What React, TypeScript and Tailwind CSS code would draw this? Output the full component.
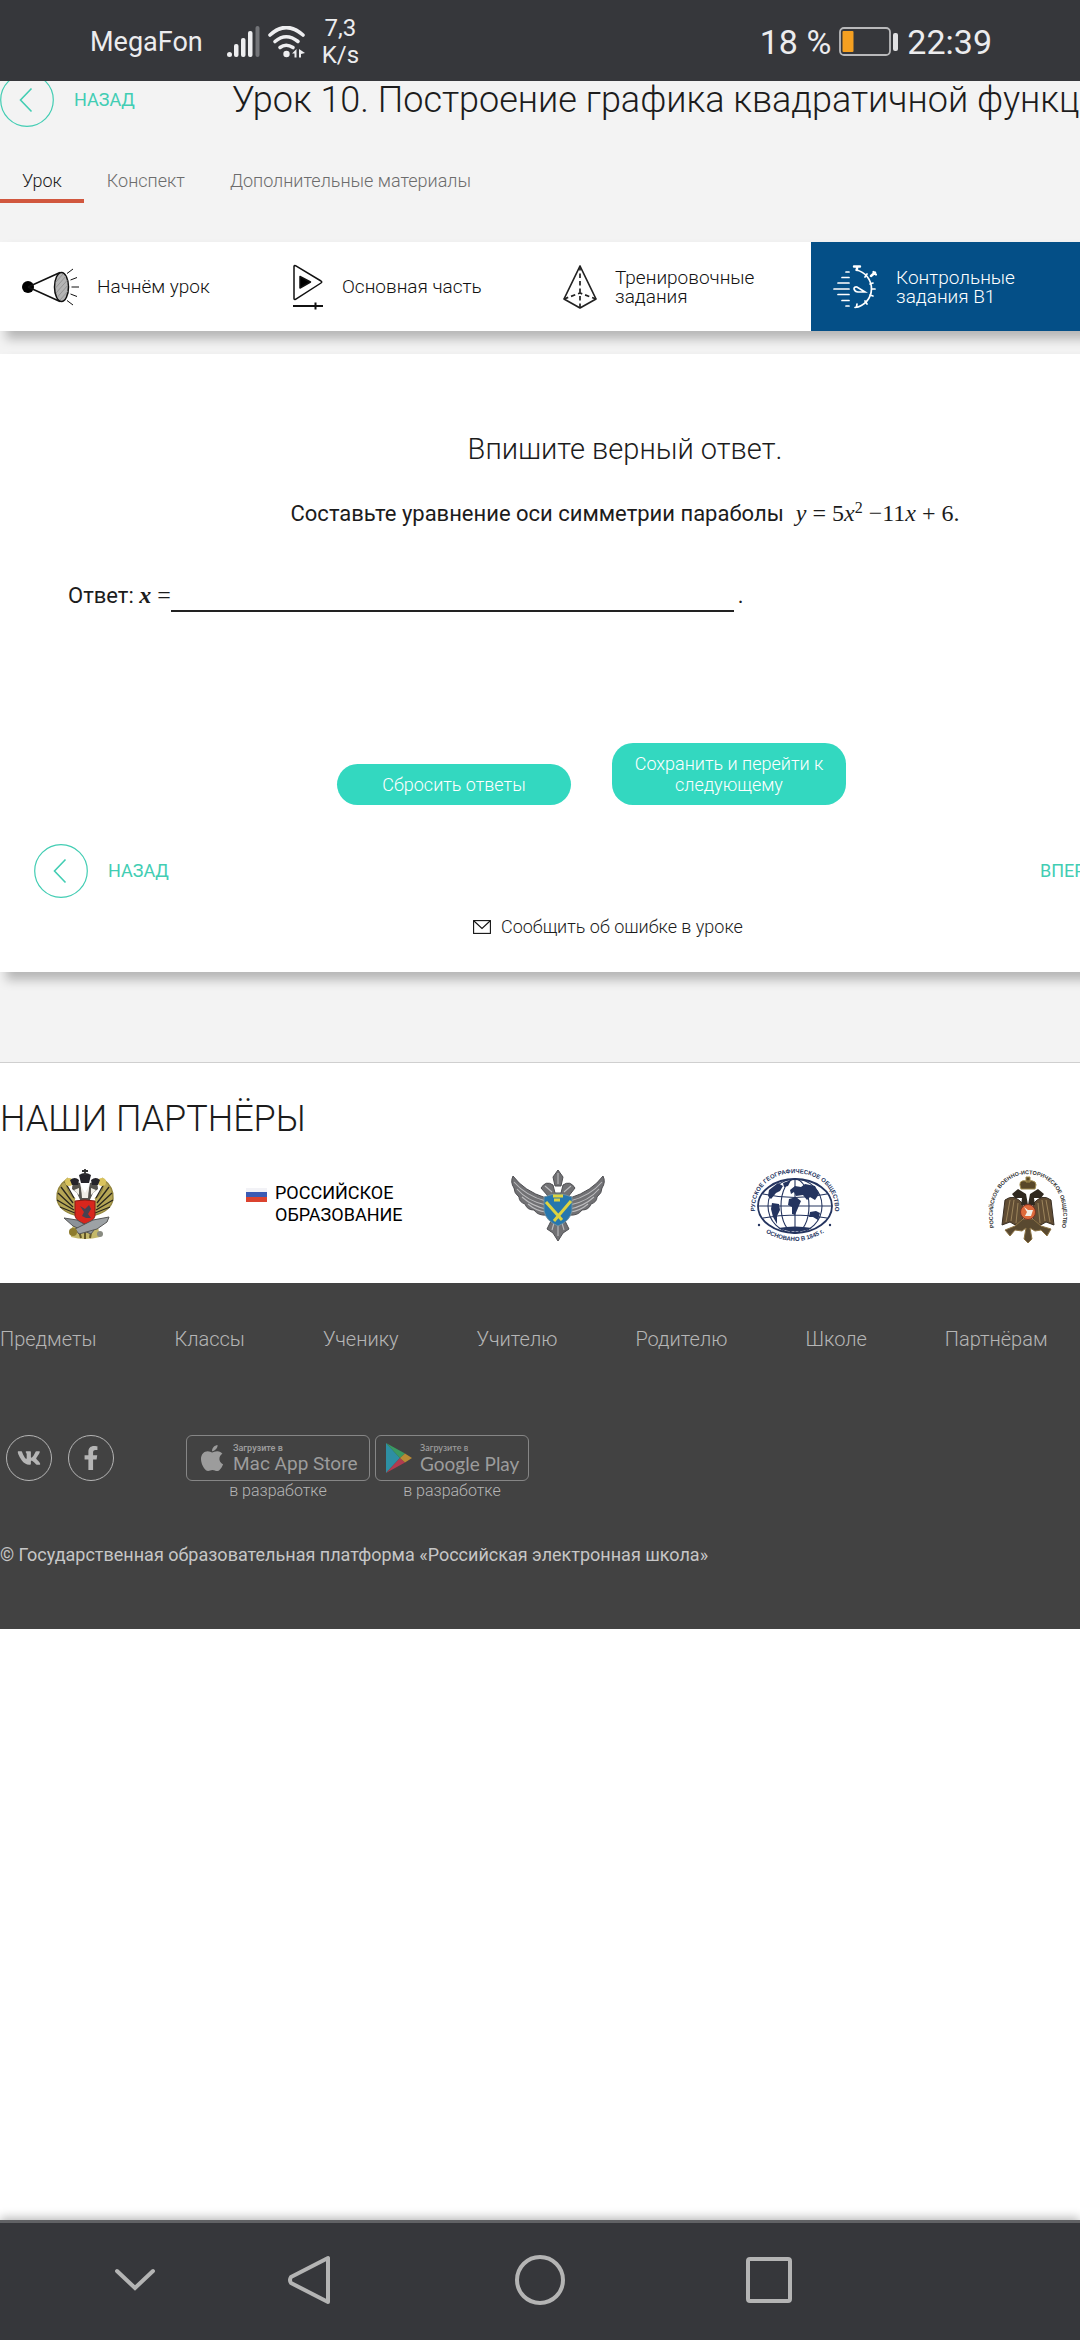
import React from 'react';
import { FaApple, FaFacebookF, FaVk } from 'react-icons/fa';

interface IconProps {
  className?: string;
}

const SignalIcon: React.FC<IconProps> = ({ className }) => (
  <svg viewBox="0 0 33 32" className={className} fill="#eeeef0">
    <rect x="0" y="26" width="5" height="5" rx="2.5" />
    <rect x="7" y="18" width="4.5" height="13" rx="2" />
    <rect x="14" y="12" width="4.5" height="19" rx="2" />
    <rect x="21" y="5" width="4.5" height="26" rx="2" />
    <rect x="28.5" y="0" width="4" height="31" rx="2" fill="#737478" />
  </svg>
);

const WifiIcon: React.FC<IconProps> = ({ className }) => (
  <svg viewBox="0 0 38 32" className={className} fill="none" stroke="#eeeef0" strokeWidth="3.6" strokeLinecap="round">
    <path d="M2 9Q18 -6 35 9" />
    <path d="M7 15.5Q18 6 30 15.5" />
    <path d="M12 21.5Q18 17 25 21.5" />
    <circle cx="18.5" cy="28" r="3.2" fill="#eeeef0" stroke="none" />
    <path d="M24 27.5l4.500-4.500v8.500h-2v-4zM31 23l6 4-4 1v3.500h-2z" fill="#eeeef0" stroke="none" />
  </svg>
);

const BatteryIcon: React.FC<IconProps> = ({ className }) => (
  <svg viewBox="0 0 60 30" className={className}>
    <rect x="1" y="1" width="50" height="27" rx="4" fill="none" stroke="#b9b9bb" strokeWidth="1.8" />
    <rect x="3.5" y="4" width="11" height="21" rx="1" fill="#f5a021" />
    <rect x="54" y="6" width="5" height="18" rx="2" fill="#e0e0e2" />
  </svg>
);

const ProjectorIcon: React.FC<IconProps> = ({ className }) => (
  <svg viewBox="0 0 58 38" className={className} fill="none" stroke="#111" strokeWidth="1.5">
    <circle cx="6" cy="19" r="6" fill="#000" stroke="none" />
    <path d="M6 19L38 4.500M6 19L38 33.500" />
    <ellipse cx="39.5" cy="19" rx="7" ry="14.5" fill="#b4b4b4" />
    <path
      d="M34 14L41 6M33.500 20L44 8M34 25L45.500 12M35.500 29L46 17M38 32L46 23"
      stroke="#8a8a8a"
      strokeWidth=".8"
    />
    <path d="M45 5.500L51 1M48.500 12L55 9.500M49.500 19H57M48.500 26L55 28.500M45 32.500L51 37" strokeWidth="1" />
  </svg>
);

const PlayIcon: React.FC<IconProps> = ({ className }) => (
  <svg viewBox="0 0 30 46" className={className} fill="none" stroke="#111" strokeWidth="1.5" strokeLinejoin="round">
    <path d="M1 2.500Q1 1 2.500 1.700L28 17Q29.500 18 28 19L2.500 35.300Q1 36 1 34.500Z" />
    <path d="M7 12.500L17.500 18L7 24Z" fill="#000" />
    <path d="M0 42H30M22.500 38.500V45.500" strokeWidth="2" />
  </svg>
);

const PyramidIcon: React.FC<IconProps> = ({ className }) => (
  <svg viewBox="0 0 34 44" className={className} fill="none" stroke="#222" strokeWidth="1.7" strokeLinejoin="round">
    <path d="M17 1L1 34L17 43L33 34Z" />
    <path d="M17 1V43M1 34L17 28L33 34" strokeDasharray="4.5 3" />
  </svg>
);

const StopwatchIcon: React.FC<IconProps> = ({ className }) => (
  <svg viewBox="0 0 44 44" className={className} fill="none" stroke="#fff" strokeWidth="1.7" strokeLinecap="round">
    <path d="M13 7h3M9 12.500h7M5 18h11M1 24h15M5 29.500h11M9 35.500h7M13 41h3" />
    <path d="M23 5A19 19 0 0 1 22 42.500" />
    <path d="M21 1.500H27M24 1.500V5M38 11L42 7.500M40.500 7L43 9.500" strokeWidth="2.4" />
    <path d="M34 9l-2 3M40 18l-3 1M42 24h-3M40 31l-3-1M34 39l-2-3M23.500 42l.5-3" />
    <path d="M32 27L24 22Q21 21.500 21 24Q22 27 25 27Z" />
  </svg>
);

const MailIcon: React.FC<IconProps> = ({ className }) => (
  <svg viewBox="0 0 18 14" className={className} fill="none" stroke="#111" strokeWidth="1.1">
    <rect x=".6" y=".6" width="16.8" height="12.8" />
    <path d="M1 1L9 8.500L17 1" />
  </svg>
);

const PlayStoreIcon: React.FC<IconProps> = ({ className }) => (
  <svg viewBox="0 0 26 30" className={className}>
    <path d="M0 0L14 15L0 30Z" fill="#2d8fa3" />
    <path d="M0 0L19 10.500L14 15Z" fill="#3a9a62" />
    <path d="M0 30L19 19.500L14 15Z" fill="#b03c50" />
    <path d="M19 10.500L26 15L19 19.500L14 15Z" fill="#b98a35" />
  </svg>
);

// Emblem of the ministry of education
const MinistryEmblem: React.FC<IconProps> = ({ className }) => (
  <svg viewBox="0 0 60 70" className={className}>
    <g fill="#b5a555" stroke="#94863f" strokeWidth="1.5">
      <path d="M20 30Q10 22 12 10Q1 18 2 30Q4 42 20 46" />
      <path d="M40 30Q50 22 48 10Q59 18 58 30Q56 42 40 46" />
    </g>
    <g stroke="#29261d" strokeWidth="1.3" fill="none">
      <path d="M6 18L18 34M3 24L18 38M2 31L19 41M5 38L20 44M10 13L19 29" />
      <path d="M54 18L42 34M57 24L42 38M58 31L41 41M55 38L40 44M50 13L41 29" />
    </g>
    <circle cx="14" cy="13" r="4" fill="#d9c35d" />
    <circle cx="47" cy="13" r="4" fill="#d9c35d" />
    <path d="M25 14Q17 11 17 20L22 24L26 33H34L38 24L43 20Q43 11 35 14L33 24H27Z" fill="#55534d" />
    <path d="M26 17L30 24L34 17L33 29H27ZM19 21L24 19V26ZM41 21L36 19V26Z" fill="#f0eee6" />
    <path d="M24 6Q30 2 36 6L34 14H26ZM15 11Q20 7 24 11L23 16H17ZM36 11Q41 7 45 11L43 16H37Z" fill="#25242a" />
    <path d="M30 0V6M27 2H33" stroke="#333" strokeWidth="1.8" />
    <path d="M17 58Q30 48 43 58L45 68Q30 72 16 68Z" fill="#c4b86a" />
    <path d="M23 58L26 69M30 56V70M37 58L35 69" stroke="#625627" strokeWidth="2" />
    <path d="M20 32Q30 30 40 32V47Q38 53 30 55Q22 53 20 47Z" fill="#d8261d" stroke="#861b15" />
    <path d="M25 37L30 40L34 36L36 40L33 45L36 49H31L27 47L29 43Z" fill="#464150" />
    <path d="M9 49L22 51L39 61L36 65L18 57Z" fill="#8c9298" stroke="#555" />
    <path d="M54 48L38 51L20 60L24 65L42 60L52 53Z" fill="#9da2a5" stroke="#555" />
    <circle cx="18" cy="63" r="4" fill="#8d7b2d" />
    <circle cx="45" cy="65" r="3" fill="#898b81" />
  </svg>
);

const SupervisionEmblem: React.FC<IconProps> = ({ className }) => (
  <svg viewBox="0 0 96 72" className={className}>
    <g fill="#717174" stroke="#4f4f53">
      <path d="M36 29Q14 22 3 7Q0 13 4 19Q4 24 9 28Q9 33 15 35Q17 41 24 41Q28 47 37 46Z" />
      <path d="M60 29Q82 22 93 7Q96 13 92 19Q92 24 87 28Q87 33 81 35Q79 41 72 41Q68 47 59 46Z" />
      <path d="M42 50H54L59 60L53 64L48 72L43 64L37 60Z" />
      <path d="M38 27L31 19Q36 11 43 16L45 24H51L53 16Q60 11 65 19L58 28Z" />
      <path d="M43 8L48 1L53 8L51 17H45Z" />
    </g>
    <g fill="none" stroke="#bcbcbe" strokeWidth="1.1">
      <path d="M4 13Q16 27 36 32M7 20Q17 32 36 36M12 28Q22 37 36 40M18 35Q26 42 36 43" />
      <path d="M92 13Q80 27 60 32M89 20Q79 32 60 36M84 28Q74 37 60 40M78 35Q70 42 60 43" />
      <path d="M44 54L42 61M48 54V67M52 54L54 61M48 4V15M35 17L42 23M61 17L54 23" />
    </g>
    <path d="M34 28Q48 22 62 28V42Q60 52 48 57Q36 52 34 42Z" fill="#2777ae" stroke="#73909d" />
    <path d="M36 33L52 51M61 32L44 52M43 27H53M44 31H50" stroke="#ddd340" strokeWidth="3" />
  </svg>
);

const GeographicEmblem: React.FC<IconProps> = ({ className }) => (
  <svg viewBox="0 0 90 72" className={className} fill="#24345f">
    <defs>
      <path id="geo-top" d="M6 49C-6 -11 96 -11 84 49" />
      <path id="geo-bottom" d="M12 61Q45 83 78 61" />
    </defs>
    <g fill="none" stroke="#24345f" strokeWidth="1.1">
      <ellipse cx="45" cy="37" rx="37" ry="27" strokeWidth="1.8" />
      <ellipse cx="45" cy="37" rx="14" ry="27" />
      <ellipse cx="45" cy="37" rx="27" ry="27" />
      <path d="M45 10V64M8 37H82M13 25Q45 32 77 25M13 49Q45 43 77 49" />
    </g>
    <path d="M19 21L28 14L33 17L30 22L26 24L21 30L18 27Z" />
    <path d="M33 14L41 11L38 17L34 18ZM40 21L45 17L51 18L55 15L65 17L69 25L65 31L60 28L57 31L53 26L46 27L44 23L41 25Z" />
    <path d="M39 30L46 28L51 32L48 39L45 46L42 45L42 38L38 36ZM22 34L29 35L30 41L27 47L27 55L23 48L21 40ZM60 43L66 42L70 44L68 51L63 48L59 48Z" />
    <path d="M28 59Q45 56 62 59Q46 66 28 59Z" />
    <g fontFamily="Liberation Sans" fontWeight="700">
      <text fontSize="6">
        <textPath href="#geo-top" startOffset="50%" textAnchor="middle">РУССКОЕ ГЕОГРАФИЧЕСКОЕ ОБЩЕСТВО</textPath>
      </text>
      <text fontSize="6">
        <textPath href="#geo-bottom" startOffset="50%" textAnchor="middle">ОСНОВАНО В 1845 г.</textPath>
      </text>
    </g>
    <circle cx="9" cy="56" r="1.2" />
    <circle cx="80" cy="56" r="1.2" />
  </svg>
);

const HistoryEmblem: React.FC<IconProps> = ({ className }) => (
  <svg viewBox="0 0 76 74" className={className}>
    <defs>
      <path id="history-arc" d="M5 63C-13 -14 89 -14 71 63" />
    </defs>
    <text fontSize="5.5" fontFamily="Liberation Sans" fontWeight="700" fill="#333">
      <textPath href="#history-arc" startOffset="50%" textAnchor="middle">РОССИЙСКОЕ ВОЕННО-ИСТОРИЧЕСКОЕ ОБЩЕСТВО</textPath>
    </text>
    <path d="M33 35Q24 24 15 31L12 56L20 53L27 57L33 49ZM43 35Q52 24 61 31L64 56L56 53L49 57L43 49Z" fill="#614d34" stroke="#392f24" />
    <path d="M20 31L16 53M24 31L21 52M28 34L26 54M56 31L60 53M52 31L55 52M48 34L50 54" stroke="#9c845b" strokeWidth="1" />
    <path d="M31 36L32 29L25 29L22 25L28 20L36 25L38 36L40 25L48 20L54 25L51 29L44 29L45 36Z" fill="#30291f" />
    <path d="M31 20Q27 10 37 12Q49 10 45 20ZM36 13V8H40V13Z" fill="#594829" stroke="#a08a4d" />
    <path d="M33 50L25 57L15 61L20 67L25 61L32 62L36 59L34 70L38 74L42 70L40 59L45 62L51 61L57 67L61 60L51 57L43 50Z" fill="#594930" stroke="#8d7445" />
    <circle cx="38" cy="43" r="7.5" fill="#df6a3b" stroke="#7c3224" />
    <path d="M34 38L38 41L43 41L41 47L35 47L37 43Z" fill="#f3eee6" />
  </svg>
);

const BackLink: React.FC = () => (
  <a href="#back" className="flex items-center gap-5 text-lg leading-6 text-[#42cdb3]">
    <svg viewBox="0 0 54 54" className="size-[54px]" fill="none" stroke="currentColor">
      <circle cx="27" cy="27" r="26.3" strokeWidth="1.2" />
      <path d="M31.500 15.500L20.500 27L31.500 38.500" strokeWidth="1.6" />
    </svg>
    НАЗАД
  </a>
);

const footerLinks = ['Предметы', 'Классы', 'Ученику', 'Учителю', 'Родителю', 'Школе', 'Партнёрам'];

const StatusBar: React.FC = () => (
  <div className="relative z-10 flex h-[81px] shrink-0 items-center justify-between bg-[#36373b] pt-[2px] pr-[88px] pl-[90px] text-[#ececee]">
    <div className="flex items-center">
      <span className="text-[27px] leading-8">MegaFon</span>
      <SignalIcon className="ml-6 h-8 w-[33px]" />
      <WifiIcon className="ml-2 h-8 w-[38px]" />
      <div className="ml-4 text-center text-2xl leading-[27px]">
        <div>7,3</div>
        <div>K/s</div>
      </div>
    </div>
    <div className="flex items-center gap-2 text-[34px] leading-10">
      <span>18 %</span>
      <BatteryIcon className="h-[30px] w-[60px]" />
      <span>22:39</span>
    </div>
  </div>
);

const LessonHeader: React.FC = () => (
  <header className="font-light">
    <div className="-mt-2 flex items-center">
      <div className="w-[232px] font-normal">
        <BackLink />
      </div>
      <h1 className="text-4xl leading-[54px] whitespace-nowrap text-[#1c1c1c]">
        Урок 10. Построение графика квадратичной функции
      </h1>
    </div>
    <nav className="mt-[42px] flex gap-px text-lg leading-6 text-[#6c6c6c]">
      <a href="#lesson" className="border-b-4 border-[#d1573e] px-[22px] pb-[6px] text-[#1c1c1c]">Урок</a>
      <a href="#notes" className="px-[22px]">Конспект</a>
      <a href="#extra" className="px-[22px]">Дополнительные материалы</a>
    </nav>
  </header>
);

const StepBar: React.FC = () => (
  <nav className="relative mt-[39px] flex h-[89px] bg-white text-[19px] leading-[19px] font-light text-[#111] shadow-[6px_8px_10px_rgba(0,0,0,0.25)]">
    <a href="#start" className="flex w-[271px] items-center gap-[17px] pl-[22px]">
      <ProjectorIcon className="h-[38px] w-[58px]" />
      Начнём урок
    </a>
    <a href="#main" className="flex w-[270px] items-center gap-[19px] pl-[22px]">
      <PlayIcon className="h-[46px] w-[30px]" />
      Основная часть
    </a>
    <a href="#training" className="flex w-[270px] items-center gap-[18px] pl-[22px]">
      <PyramidIcon className="h-[44px] w-[34px]" />
      <span>Тренировочные<br />задания</span>
    </a>
    <a href="#control" className="flex flex-1 items-center gap-[19px] bg-[#044f87] pl-[22px] text-white">
      <StopwatchIcon className="size-[44px]" />
      <span>Контрольные<br />задания В1</span>
    </a>
  </nav>
);

const Task: React.FC = () => (
  <main className="mt-[23px] bg-white pb-[33px] text-[#1c1c1c] shadow-[6px_8px_10px_rgba(0,0,0,0.25)]">
    <h2 className="pt-[75px] text-center text-[29px] leading-10 font-light">Впишите верный ответ.</h2>
    <p className="mt-6 text-center text-[22px] leading-[42px]">
      Составьте уравнение оси симметрии параболы
      <span className="ml-3 font-['Liberation_Serif',serif] text-2xl leading-none">
        <i>y</i> = 5<i>x</i><sup className="text-base leading-none">2</sup> −11<i>x</i> + 6.
      </span>
    </p>
    <div className="mt-[45px] flex items-end pl-[68px] text-[22px] leading-8">
      <label htmlFor="answer">
        Ответ: <span className="font-['Liberation_Serif',serif] text-2xl leading-none"><i className="font-bold">x</i> =</span>
      </label>
      <input id="answer" type="text" className="h-8 w-[563px] border-b-2 border-[#222] bg-transparent outline-none" />
      <span className="ml-1">.</span>
    </div>
    <div className="mt-[131px] flex items-end gap-[41px] pl-[337px] text-lg leading-[21px] font-light text-white">
      <button type="button" className="w-[234px] rounded-[21px] bg-[#33d8c0] px-5 py-[10px]">Сбросить ответы</button>
      <button type="button" className="w-[234px] rounded-[21px] bg-[#33d8c0] px-5 py-[10px]">Сохранить и перейти к следующему</button>
    </div>
    <div className="mt-[39px] flex items-center justify-between pr-[34px] pl-[34px]">
      <BackLink />
      <a href="#next" className="w-[176px] text-lg leading-6 text-[#42cdb3]">ВПЕРЁД</a>
    </div>
    <div className="mt-[17px] flex pl-[473px] text-lg leading-6 font-light">
      <a href="#report" className="flex items-center gap-[10px]">
        <MailIcon className="h-[14px] w-[18px]" />
        Сообщить об ошибке в уроке
      </a>
    </div>
  </main>
);

const Partners: React.FC = () => (
  <section className="mt-[90px] border-t border-[#cfcfcf] bg-white">
    <h2 className="pt-8 text-4xl leading-[48px] font-light text-[#1c1c1c]">НАШИ ПАРТНЁРЫ</h2>
    <div className="flex h-[140px] items-start pt-[26px] pl-[55px]">
      <MinistryEmblem className="h-[70px] w-[60px]" />
      <div className="ml-[131px] flex h-[70px] items-center gap-2">
        <svg viewBox="0 0 21 14" className="mb-[18px] h-[14px] w-[21px]">
          <rect width="21" height="5" fill="#f2f2f6" />
          <rect y="4" width="21" height="5" fill="#3b5bb4" />
          <rect y="9" width="21" height="5" fill="#db432f" />
        </svg>
        <div className="text-lg leading-[22px] text-black">
          РОССИЙСКОЕ<br />ОБРАЗОВАНИЕ
        </div>
      </div>
      <div className="flex flex-1 items-start justify-end gap-[144px] pr-[182px]">
        <SupervisionEmblem className="h-[72px] w-[96px]" />
        <GeographicEmblem className="h-[72px] w-[90px]" />
        <HistoryEmblem className="ml-1 h-[74px] w-[80px]" />
      </div>
    </div>
  </section>
);

const Footer: React.FC = () => (
  <footer className="bg-[#424242] pt-11 pb-[62px] font-light text-[#b5b5b5]">
    <nav className="flex gap-[78px] text-xl leading-6">
      {footerLinks.map(link => (
        <a key={link} href="#menu">{link}</a>
      ))}
    </nav>
    <div className="mt-[84px] flex items-start pl-[6px]">
      <a href="#vk" aria-label="VK" className="flex size-[46px] items-center justify-center rounded-full border border-[#b5b5b5]">
        <FaVk className="size-6" />
      </a>
      <a href="#facebook" aria-label="Facebook" className="ml-4 flex size-[46px] items-center justify-center rounded-full border border-[#b5b5b5]">
        <FaFacebookF className="size-6" />
      </a>
      <div className="ml-[72px] text-center text-base leading-5">
        <a href="#mac" className="flex h-[46px] w-[184px] items-center gap-[6px] rounded-md border border-[#868686] pl-[10px] text-left text-[#9c9c9c]">
          <FaApple className="size-[30px]" />
          <span className="font-normal">
            <span className="block text-[9px] leading-3 font-semibold">Загрузите в</span>
            <span className="block text-[19px] leading-5">Mac App Store</span>
          </span>
        </a>
        в разработке
      </div>
      <div className="ml-[5px] text-center text-base leading-5">
        <a href="#google" className="flex h-[46px] w-[154px] items-center gap-2 rounded-md border border-[#868686] pl-[10px] text-left text-[#9c9c9c]">
          <PlayStoreIcon className="h-[30px] w-[26px]" />
          <span className="font-[Lato,sans-serif] font-normal">
            <span className="block text-[9px] leading-3 font-semibold">Загрузите в</span>
            <span className="block text-[19px] leading-5">Google Play</span>
          </span>
        </a>
        в разработке
      </div>
    </div>
    <p className="mt-[42px] text-lg leading-6 font-normal text-[#c6c6c6]">
      © Государственная образовательная платформа «Российская электронная школа»
    </p>
  </footer>
);

const SystemNav: React.FC = () => (
  <nav className="relative mt-auto flex h-[120px] shrink-0 items-center border-t-[3px] border-[#616265] bg-[#36373b] pb-[3px] pl-[115px] shadow-[0_-2px_10px_rgba(0,0,0,0.3)]">
    <button type="button" aria-label="Hide">
      <svg viewBox="0 0 40 24" className="h-6 w-10" fill="none" stroke="#b4b4b4" strokeWidth="4" strokeLinecap="round">
        <path d="M2 3L20 20L38 3" />
      </svg>
    </button>
    <button type="button" aria-label="Back" className="ml-[132px]">
      <svg viewBox="0 0 44 50" className="h-[50px] w-11" fill="none" stroke="#b4b4b4" strokeWidth="4" strokeLinejoin="round">
        <path d="M41 3V47L4 28Q2 25 4 22Z" />
      </svg>
    </button>
    <button type="button" aria-label="Home" className="ml-[184px] size-[50px] rounded-full border-4 border-[#b4b4b4]" />
    <button type="button" aria-label="Recents" className="ml-[181px] size-[46px] rounded-sm border-4 border-[#b4b4b4]" />
  </nav>
);

const App: React.FC = () => (
  <div className="flex min-h-screen flex-col overflow-hidden bg-white font-[Roboto,sans-serif]">
    <StatusBar />
    {/* The site keeps its desktop width, the right edge is cut off on a phone */}
    <div className="min-w-[1250px] bg-[#f3f3f3]">
      <LessonHeader />
      <StepBar />
      <Task />
      <Partners />
      <Footer />
    </div>
    <SystemNav />
  </div>
);

export default App;
